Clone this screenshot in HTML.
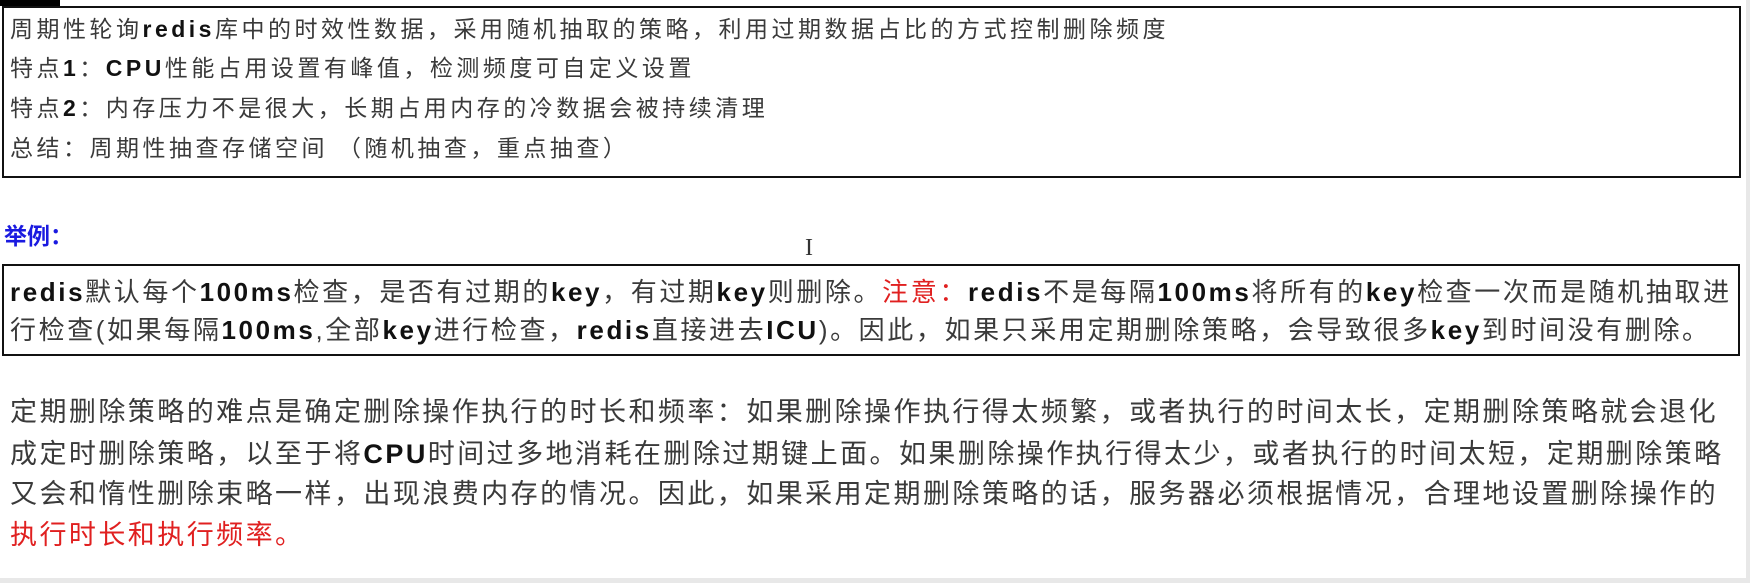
<!DOCTYPE html>
<html><head><meta charset="utf-8"><style>
html,body{margin:0;padding:0;background:#fff;width:1750px;height:583px;overflow:hidden;position:relative}
body{font-family:"Liberation Sans","Noto Sans CJK SC",sans-serif;color:#3a3a3a}
b{font-weight:bold;color:#111}
.l{position:absolute;white-space:nowrap;left:10px;line-height:1}
.b1{font-size:23px;letter-spacing:3.5px}
.b2{font-size:26px;letter-spacing:2.6px}
.p{font-size:27px;letter-spacing:2.45px}
.box{position:absolute;border:2px solid #111;box-sizing:border-box}
.r{color:#e02020}
</style></head><body>
<div style="position:absolute;left:0;top:0;width:60px;height:6px;background:#000"></div>
<div class="box" style="left:2px;top:6px;width:1739px;height:172px"></div>
<div class="l b1" style="top:18px">周期性轮询<b>redis</b>库中的时效性数据，采用随机抽取的策略，利用过期数据占比的方式控制删除频度</div>
<div class="l b1" style="top:57px">特点<b>1</b>：<b>CPU</b>性能占用设置有峰值，检测频度可自定义设置</div>
<div class="l b1" style="top:97px">特点<b>2</b>：内存压力不是很大，长期占用内存的冷数据会被持续清理</div>
<div class="l b1" style="top:137px">总结：周期性抽查存储空间 （随机抽查，重点抽查）</div>
<div class="l" style="top:225px;left:4px;font-size:23px;font-weight:bold;color:#1a1ae0">举例：</div>
<div style="position:absolute;left:805px;top:236px;font-size:24px;color:#333;font-family:'Liberation Serif',serif;line-height:1">I</div>
<div class="box" style="left:2px;top:264px;width:1738px;height:92px"></div>
<div class="l b2" style="top:279px"><b>redis</b>默认每个<b>100ms</b>检查，是否有过期的<b>key</b>，有过期<b>key</b>则删除。<span class="r">注意：</span><b>redis</b>不是每隔<b>100ms</b>将所有的<b>key</b>检查一次而是随机抽取进</div>
<div class="l b2" style="top:317px">行检查(如果每隔<b>100ms</b>,全部<b>key</b>进行检查，<b>redis</b>直接进去<b>ICU</b>)。因此，如果只采用定期删除策略，会导致很多<b>key</b>到时间没有删除。</div>
<div class="l p" style="top:399px">定期删除策略的难点是确定删除操作执行的时长和频率：如果删除操作执行得太频繁，或者执行的时间太长，定期删除策略就会退化</div>
<div class="l p" style="top:441px">成定时删除策略，以至于将<b>CPU</b>时间过多地消耗在删除过期键上面。如果删除操作执行得太少，或者执行的时间太短，定期删除策略</div>
<div class="l p" style="top:481px">又会和惰性删除束略一样，出现浪费内存的情况。因此，如果采用定期删除策略的话，服务器必须根据情况，合理地设置删除操作的</div>
<div class="l p r" style="top:522px">执行时长和执行频率。</div>
<div style="position:absolute;left:0;top:578px;width:1750px;height:5px;background:#e8e8e8"></div>
<div style="position:absolute;left:1746px;top:0;width:4px;height:583px;background:#e8e8e8"></div>
</body></html>
